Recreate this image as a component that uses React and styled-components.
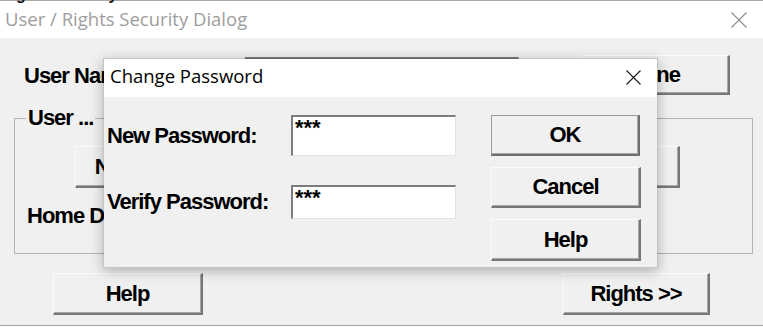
import React from "react";
import styled, { createGlobalStyle } from "styled-components";

const Global = createGlobalStyle`
  html, body { margin: 0; padding: 0; background: #fff; overflow: hidden; }
  #root { width: 763px; height: 327px; }
  * { box-sizing: border-box; }
`;

const Stage = styled.div`
  position: relative;
  width: 763px;
  height: 327px;
  overflow: hidden;
  background: #fff;
  font-family: "Liberation Sans", Arial, sans-serif;
`;

const BehindStrip = styled.div`
  height: 3px;
  overflow: hidden;
  background: linear-gradient(#a8a8a8, #a8a8a8) top / 100% 1px no-repeat, #fff;
`;

const BehindText = styled.div`
  width: 333px;
  margin-top: -14px;
  overflow: hidden;
  white-space: nowrap;
  font: bold 16px/17px "Liberation Sans", Arial, sans-serif;
  color: #111;
`;

const Window = styled.div`
  display: flex;
  flex-direction: column;
  height: 323px;
`;

const TitleBar = styled.div`
  height: ${(p) => p.$h}px;
  flex: none;
  display: flex;
  align-items: flex-start;
  justify-content: space-between;
  background: #fff;
  padding: ${(p) => p.$pad};
`;

const TitleText = styled.span`
  font: 18.5px/24px "Open Sans", "Noto Sans", sans-serif;
  color: ${(p) => p.$color};
  white-space: nowrap;
`;

const CloseIcon = styled.svg`
  display: block;
  flex: none;
  margin: ${(p) => p.$margin};
`;

const WindowBody = styled.div`
  flex: 1;
  background: #f0f0f0;
  border-bottom: 1px solid #a3a3a3;
  display: flex;
  flex-direction: column;
`;

const Row = styled.div`
  display: flex;
  align-items: flex-start;
  height: ${(p) => p.$h}px;
  margin-top: ${(p) => p.$mt || 0}px;
  padding-left: ${(p) => p.$pl || 0}px;
  justify-content: ${(p) => p.$justify || "flex-start"};
`;

const Label = styled.span`
  display: block;
  font: bold 22px/24px "Liberation Sans", Arial, sans-serif;
  letter-spacing: -1px;
  color: #000;
  white-space: nowrap;
  width: ${(p) => (p.$w ? `${p.$w}px` : "auto")};
  margin-top: ${(p) => p.$mt || 0}px;
  margin-left: ${(p) => p.$ml || 0}px;
`;

const TextBox = styled.div`
  flex: none;
  width: ${(p) => p.$w}px;
  height: ${(p) => p.$h}px;
  margin-top: ${(p) => p.$mt || 0}px;
  background: #fff;
  border-style: solid;
  border-width: 2px 1px 1px 2px;
  border-color: #7d7d7d #e3e3e3 #e3e3e3 #7d7d7d;
  padding: 0 2px;
  font: bold 22px/22px "Liberation Sans", Arial, sans-serif;
  color: #000;
  overflow: hidden;
  white-space: nowrap;
`;

const Button = styled.button`
  flex: none;
  display: flex;
  align-items: center;
  justify-content: center;
  width: ${(p) => p.$w}px;
  height: ${(p) => p.$h}px;
  margin: ${(p) => p.$margin || "0"};
  padding: 0 ${(p) => p.$pr || 0}px 0 0;
  background: #f0f0f0;
  color: #000;
  font: bold 22px/24px "Liberation Sans", Arial, sans-serif;
  letter-spacing: -1px;
  white-space: nowrap;
  border-style: solid;
  border-width: 1px 2px 2px 1px;
  border-color: ${(p) =>
    p.$default ? "#9a9a9a #6e6e6e #6e6e6e #9a9a9a" : "#fbfbfb #777 #777 #fbfbfb"};
  box-shadow: inset -1px -1px 0 #a8a8a8;
`;

const GroupBox = styled.fieldset`
  width: 739px;
  height: 148px;
  margin: 8px 0 0 14px;
  padding: 0 0 0 11px;
  border: 1px solid #b4b4b4;
  min-width: 0;
`;

const GroupLegend = styled.legend`
  padding: 0 2px;
  font: bold 22px/24px "Liberation Sans", Arial, sans-serif;
  letter-spacing: -1px;
  color: #000;
`;

const Modal = styled.div`
  position: absolute;
  left: 103px;
  top: 58px;
  width: 555px;
  height: 210px;
  display: flex;
  flex-direction: column;
  border: 1px solid rgba(0, 0, 0, 0.18);
  box-shadow: 0 3px 12px rgba(0, 0, 0, 0.28);
`;

const ModalBody = styled.div`
  flex: 1;
  display: flex;
  align-items: flex-start;
  background: #f0f0f0;
  padding: 18px 0 0 3px;
`;

const Fields = styled.div`
  display: grid;
  grid-template-columns: 184px 165px;
  grid-template-rows: 41px 34px;
  row-gap: 29px;
  align-items: center;
`;

const ButtonColumn = styled.div`
  display: flex;
  flex-direction: column;
  gap: 11px;
  margin-left: 35px;
`;

const X = ({ size, color, margin }) => (
  <CloseIcon $margin={margin} width={size} height={size} viewBox={`0 0 ${size} ${size}`}>
    <path
      d={`M0.5 0.5 L${size - 0.5} ${size - 0.5} M${size - 0.5} 0.5 L0.5 ${size - 0.5}`}
      stroke={color}
      strokeWidth="1.1"
      fill="none"
    />
  </CloseIcon>
);

export default function App() {
  return (
    <Stage>
      <Global />
      <BehindStrip>
        <BehindText>Rights Security Administration for all Users Accounts</BehindText>
      </BehindStrip>
      <Window>
        <TitleBar $h={35} $pad="4px 0 0 5px">
          <TitleText $color="#9d9d9d">User / Rights Security Dialog</TitleText>
          <X size={16} color="#8c8c8c" margin="5px 16px 0 0" />
        </TitleBar>
        <WindowBody>
          <Row $h={44} $mt={16} $pl={24}>
            <Label $w={221} $mt={10}>User Name:</Label>
            <TextBox $w={274} $h={41} $mt={3} />
            <Button $w={147} $h={40} $pr={3} $margin="1px 0 0 64px">Done</Button>
          </Row>
          <GroupBox>
            <GroupLegend>User ...</GroupLegend>
            <Row $h={42} $mt={16} $justify="space-between">
              <Button $w={147} $h={42} $margin="0 0 0 49px">New User...</Button>
              <Button $w={147} $h={42} $margin="0 72px 0 0">Delete</Button>
            </Row>
            <Label $mt={16} $ml={1}>Home Directory:</Label>
          </GroupBox>
          <Row $h={42} $mt={19} $pl={53}>
            <Button $w={150} $h={42}>Help</Button>
            <Button $w={147} $h={42} $margin="0 0 0 360px">Rights &gt;&gt;</Button>
          </Row>
        </WindowBody>
      </Window>

      <Modal>
        <TitleBar $h={38} $pad="5px 0 0 6px">
          <TitleText $color="#000">Change Password</TitleText>
          <X size={15} color="#1a1a1a" margin="6px 16px 0 0" />
        </TitleBar>
        <ModalBody>
          <Fields>
            <Label>New Password:</Label>
            <TextBox $w={165} $h={41}>***</TextBox>
            <Label>Verify Password:</Label>
            <TextBox $w={165} $h={34}>***</TextBox>
          </Fields>
          <ButtonColumn>
            <Button $default $w={149} $h={41}>OK</Button>
            <Button $w={150} $h={41}>Cancel</Button>
            <Button $w={150} $h={42}>Help</Button>
          </ButtonColumn>
        </ModalBody>
      </Modal>
    </Stage>
  );
}
